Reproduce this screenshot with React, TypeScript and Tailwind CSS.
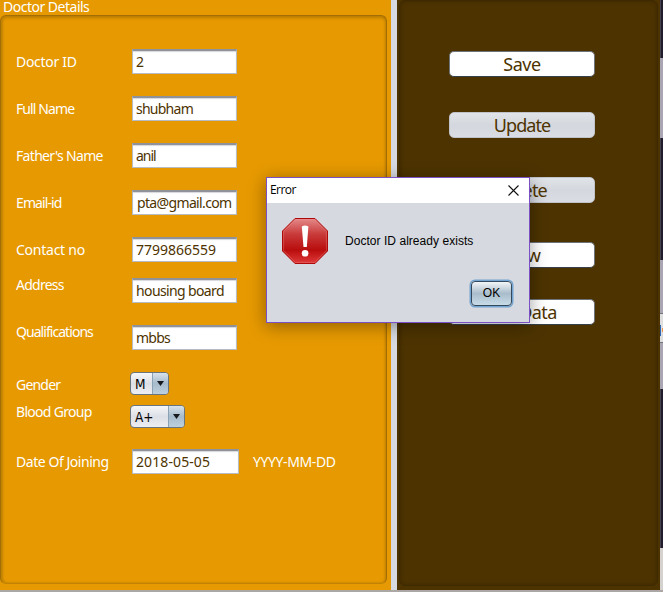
import React from "react";

const labels = [
  { text: "Doctor ID", gap: "mt-[36px]", track: "tracking-[-0.3px]" },
  { text: "Full Name", gap: "mt-[27px]", track: "tracking-[-0.9px]" },
  { text: "Father's Name", gap: "mt-[27px]", track: "tracking-[-0.68px]" },
  { text: "Email-id", gap: "mt-[27px]", track: "tracking-[-0.9px]" },
  { text: "Contact no", gap: "mt-[27px]", track: "tracking-[-0.25px]" },
  { text: "Address", gap: "mt-[15px]", track: "tracking-[-0.75px]" },
  { text: "Qualifications", gap: "mt-[27px]", track: "tracking-[-0.95px]" },
  { text: "Gender", gap: "mt-[33px]", track: "tracking-[-0.8px]" },
  { text: "Blood Group", gap: "mt-[7px]", track: "tracking-[-0.7px]" },
  { text: "Date Of Joining", gap: "mt-[30px]", track: "tracking-[-0.45px]" },
];

const fields = [
  { value: "2", gap: "mt-[33px]", track: "" },
  { value: "shubham", gap: "mt-[22px]", track: "tracking-[-0.75px]" },
  { value: "anil", gap: "mt-[22px]", track: "tracking-[-1px]" },
  { value: "pta@gmail.com", gap: "mt-[22px]", track: "tracking-[-0.65px] pl-[4px]" },
  { value: "7799866559", gap: "mt-[22px]", track: "" },
  { value: "housing board", gap: "mt-[16px]", track: "tracking-[-0.62px]" },
  { value: "mbbs", gap: "mt-[22px]", track: "tracking-[-0.75px]" },
];

const buttons = [
  { text: "Save", gap: "mt-[51px]", on: true, track: "tracking-[-0.5px]" },
  { text: "Update", gap: "mt-[35px]", on: false, track: "tracking-[-0.95px]" },
  { text: "Delete", gap: "mt-[39px]", on: false, track: "tracking-[-0.8px]" },
  { text: "View", gap: "mt-[39px]", on: true, track: "tracking-[-0.9px]" },
  { text: "Get Data", gap: "mt-[31px]", on: true, track: "tracking-[-0.6px]" },
];

function Field({ value, className }: { value: string; className: string }) {
  return (
    <div
      className={`h-[25px] shrink-0 overflow-hidden whitespace-nowrap border border-t-2 border-[#b7bbc2] border-t-[#8f9298] bg-white pl-[3px] text-[14px] leading-[22px] text-[#4d3300] shadow-[inset_0_1px_1px_#d6d8dc] ${className}`}
    >
      {value}
    </div>
  );
}

function Combo({ value, className }: { value: string; className: string }) {
  return (
    <div
      className={`flex h-[23px] overflow-hidden rounded-[4px] border border-[#68747f] bg-linear-to-b from-[#f6f7f9] via-[#dcdfe5] to-[#eceef2] text-[14px] leading-[22px] text-black ${className}`}
    >
      <span className="flex-1 pl-[4px] font-['DejaVu_Sans_Condensed','DejaVu_Sans',sans-serif] text-[13.5px]">{value}</span>
      <span className="flex w-[16px] justify-center border-l border-[#8ba2b4] bg-linear-to-b from-[#d8e2ea] via-[#a6bbcb] to-[#bdd0de] pt-[8px]">
        <svg width="7" height="5" viewBox="0 0 7 5">
          <path d="M0 0H7L3.5 5Z" fill="#17191c" />
        </svg>
      </span>
    </div>
  );
}

function ErrorIcon() {
  return (
    <svg width="48" height="48" viewBox="0 0 48 48" className="shrink-0">
      <defs>
        <linearGradient id="stop" x1="0" y1="0" x2="0" y2="1">
          <stop offset="0" stopColor="#e58a8a" />
          <stop offset="0.35" stopColor="#c93a3a" />
          <stop offset="0.7" stopColor="#b90d0d" />
          <stop offset="1" stopColor="#e03a3a" />
        </linearGradient>
      </defs>
      <path d="M14 1.5H34L46.5 14V34L34 46.5H14L1.5 34V14Z" fill="url(#stop)" stroke="#ae0909" />
      <path d="M14.5 2.6H33.5L45.4 14.5V33.5L33.5 45.4H14.5L2.6 33.5V14.5Z" fill="none" stroke="#f09090" strokeOpacity="0.35" />
      <path d="M20.8 9.5Q24 7.5 27.4 9.5L25.8 30H22.5Z" fill="#fff" />
      <circle cx="24.1" cy="36.3" r="3.3" fill="#fff" />
    </svg>
  );
}

export default function App() {
  return (
    <div className="relative h-[592px] w-[663px] overflow-hidden bg-[#aaa7a5] font-['Noto_Sans','DejaVu_Sans',sans-serif]">
      <div className="flex h-[590px]">
        <section className="flex w-[391px] flex-col bg-[#e69900] pb-[6px] text-white">
          <h1 className="h-[15px] whitespace-nowrap pl-[3px] text-[14px] leading-[14px] tracking-[-0.5px]">Doctor Details</h1>
          <div className="flex w-[387px] flex-1 rounded-[6px] border border-[#a36e05] border-b-[#c28305] pl-[15px] shadow-[inset_0_2px_3px_#bc7e03,inset_2px_0_2px_#c58503,inset_-1px_0_2px_#c58503]">
            <div className="w-[115px] text-[14px] leading-[20px]">
              {labels.map((l) => (
                <div key={l.text} className={`h-[20px] whitespace-nowrap ${l.gap} ${l.track}`}>
                  {l.text}
                </div>
              ))}
            </div>
            <div className="-ml-px flex flex-1 flex-col">
              {fields.map((f) => (
                <Field key={f.value} value={f.value} className={`ml-[2px] w-[105px] ${f.gap} ${f.track}`} />
              ))}
              <Combo value="M" className="mt-[22px] w-[39px]" />
              <Combo value="A+" className="mt-[10px] w-[55px]" />
              <div className="mt-[21px] ml-[2px] flex items-center">
                <Field value="2018-05-05" className="w-[107px] tracking-[0.1px]" />
                <span className="ml-[14px] text-[14px] leading-[25px] tracking-[-0.4px]">YYYY-MM-DD</span>
              </div>
            </div>
          </div>
        </section>

        <div className="w-[6px] bg-[#d6d9df]" />

        <section className="w-[263px] bg-[#4d3300] pr-[2px] pb-[4px] pl-[2px]">
          <div className="flex h-full flex-col items-start rounded-[6px] border border-[#3d2902] pl-[49px] shadow-[inset_0_0_4px_#3c2700]">
            {buttons.map((b, i) => (
              <button
                key={b.text}
                className={`h-[26px] w-[146px] shrink-0 rounded-[5px] border text-[18px] leading-[25px] text-[#4d3300] ${i === 0 ? "mt-[50px]" : b.gap} ${b.track} ${
                  b.on
                    ? "border-[#6d737b] border-b-[#34404b] bg-white"
                    : "border-[#c0c3ca] bg-linear-to-b from-[#e0e3e7] via-[#d4d7dd] to-[#dadde4]"
                }`}
              >
                {b.text}
              </button>
            ))}
          </div>
        </section>

        <div className="flex w-[3px] flex-col">
          <div className="h-[58px] border-l border-[#464151] bg-[#211d2b]" />
          <div className="h-[80px] bg-[#aaa5b3]" />
          <div className="h-[122px] border-l border-[#464151] bg-[#211d2b]" />
          <div className="h-[53px] bg-[#aaa5b3]" />
          <div className="h-px bg-[#77747e]" />
          <div className="h-[11px] bg-[#dedede]" />
          <div className="flex h-[11px] bg-[#dedede]">
            <div className="w-px bg-[#2f67b0]" />
            <div className="ml-px mt-[3px] h-[4px] w-px bg-[#e8914a]" />
          </div>
          <div className="h-[6px] bg-[#dedede]" />
          <div className="h-px bg-[#77747e]" />
          <div className="h-[46px] bg-[#aaa5b3]" />
          <div className="h-[159px] border-l border-[#464151] bg-[#211d2b]" />
          <div className="flex-1 bg-[#d4d1ce]" />
        </div>
      </div>

      <div
        role="dialog"
        className="absolute top-[177px] left-[266px] flex h-[146px] w-[264px] flex-col border border-[#7a50c4] bg-[#d6d9df] font-['Liberation_Sans',Arial,sans-serif] text-black shadow-[0_3px_16px_rgba(0,0,0,0.38)]"
      >
        <div className="flex h-[25px] shrink-0 items-center justify-between bg-white pr-[10px] pl-[3px] font-['Open_Sans','Noto_Sans',sans-serif] text-[12px] tracking-[-0.55px]">
          <span className="-mt-px">Error</span>
          <svg width="11" height="11" viewBox="0 0 11 11" stroke="#111" strokeWidth="1.1" className="-mt-px">
            <path d="M0.5 0.5L10.5 10.5M10.5 0.5L0.5 10.5" />
          </svg>
        </div>
        <div className="flex pt-[14px] pl-[14px]">
          <ErrorIcon />
          <span className="mt-[16px] ml-[16px] whitespace-nowrap text-[12px] leading-[16px] tracking-[0.04px]">Doctor ID already exists</span>
        </div>
        <button className="mt-[16px] mr-[17px] h-[25px] w-[41px] shrink-0 self-end rounded-[4px] border border-[#34495c] bg-linear-to-b from-[#f3f6f8] via-[#a9bccb] to-[#c8dce8] text-[12px] leading-[23px] shadow-[0_0_0_1.5px_#73a4d1]">
          OK
        </button>
      </div>
    </div>
  );
}
